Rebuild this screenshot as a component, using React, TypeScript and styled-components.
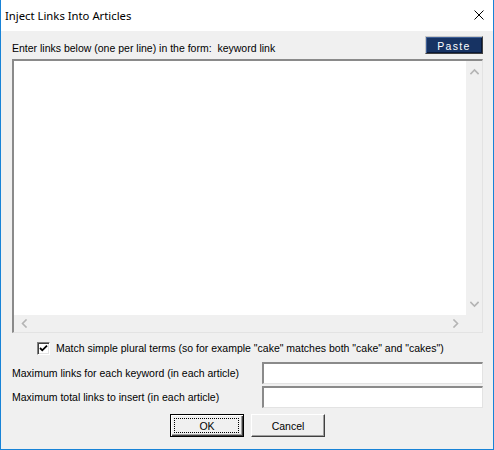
import React from "react";
import styled, { createGlobalStyle } from "styled-components";

const Global = createGlobalStyle`
  html, body { margin: 0; padding: 0; background: #ffffff; }
  body { font-family: "Liberation Sans", Arial, sans-serif; }
  * { box-sizing: border-box; }
`;

const Window = styled.div`
  width: 494px;
  height: 450px;
  display: flex;
  flex-direction: column;
  border: 1px solid #1883d7;
  border-top: none;
  background: #f0f0f0;
`;

const TitleBar = styled.div`
  height: 31px;
  flex: none;
  background: #ffffff;
  display: flex;
  align-items: center;
  justify-content: space-between;
  padding: 0 9px 1px 4px;
`;

const Title = styled.span`
  font-family: "Noto Sans", "Open Sans", sans-serif;
  font-size: 11.3px;
  color: #000;
`;

const CloseIcon = styled.svg`
  width: 10px;
  height: 10px;
  display: block;
`;

const Client = styled.div`
  flex: 1;
  display: flex;
  flex-direction: column;
  padding: 5px 10px 0 11px;
  font-size: 10.5px;
  color: #000;
`;

const HeaderRow = styled.div`
  display: flex;
  align-items: center;
  justify-content: space-between;
  height: 18px;
`;

const Label = styled.span<{ $top?: number }>`
  font-size: 10.5px;
  line-height: 13px;
  white-space: pre;
  margin-top: ${(p) => p.$top ?? 0}px;
`;

const PasteButton = styled.div`
  width: 58px;
  height: 18px;
  display: flex;
  align-items: center;
  justify-content: center;
  color: #ffffff;
  font-size: 10.5px;
  letter-spacing: 1.3px;
  background-color: #0f2c5e;
  background-image: radial-gradient(rgba(255, 255, 255, 0.07) 0.6px, transparent 0.8px);
  background-size: 2px 2px;
  border-top: 1px solid #c8c8c8;
  border-left: 1px solid #c8c8c8;
  border-right: 1px solid #404040;
  border-bottom: 1px solid #404040;
  box-shadow: inset 1px 1px 0 #3f5f96, inset -1px -1px 0 #081838;
  padding-top: 1px;
`;

const TextBox = styled.div`
  margin-top: 5px;
  height: 274px;
  display: grid;
  grid-template-columns: 1fr 16px;
  grid-template-rows: 1fr 17px;
  border-top: 2px solid #8a8a8a;
  border-left: 2px solid #8a8a8a;
  border-right: 1px solid #e3e3e3;
  border-bottom: 1px solid #e3e3e3;
  background: #f0f0f0;
`;

const TextArea = styled.div`
  background: #ffffff;
`;

const VScroll = styled.div`
  display: flex;
  flex-direction: column;
  justify-content: space-between;
  align-items: center;
  padding: 6px 0 6px 0;
  background: #f0f0f0;
`;

const HScroll = styled.div`
  display: flex;
  justify-content: space-between;
  align-items: center;
  padding: 0 6px 0 6px;
  background: #f0f0f0;
`;

const Corner = styled.div`
  background: #f0f0f0;
`;

const Chevron = styled.svg`
  width: 9px;
  height: 9px;
  display: block;
`;

const CheckRow = styled.div`
  display: flex;
  align-items: center;
  margin-top: 9px;
  padding-left: 25px;
  height: 13px;
`;

const CheckBox = styled.div`
  width: 13px;
  height: 13px;
  background: #ffffff;
  border-top: 1px solid #808080;
  border-left: 1px solid #808080;
  border-right: 1px solid #ffffff;
  border-bottom: 1px solid #ffffff;
  box-shadow: inset 1px 1px 0 #404040, inset -1px -1px 0 #e3e3e3;
  display: flex;
  align-items: center;
  justify-content: center;
  margin-right: 6px;
`;

const FieldRow = styled.div<{ $top: number }>`
  display: flex;
  align-items: center;
  justify-content: space-between;
  margin-top: ${(p) => p.$top}px;
  height: 22px;
`;

const Input = styled.div`
  width: 221px;
  height: 22px;
  background: #ffffff;
  border-top: 2px solid #8a8a8a;
  border-left: 2px solid #8a8a8a;
  border-right: 1px solid #e3e3e3;
  border-bottom: 1px solid #e3e3e3;
`;

const ButtonRow = styled.div`
  display: flex;
  justify-content: center;
  gap: 7px;
  margin-top: 6px;
`;

const Button = styled.div<{ $default?: boolean }>`
  position: relative;
  width: 74px;
  height: 23px;
  display: flex;
  align-items: center;
  justify-content: center;
  font-size: 10.5px;
  background: #f0f0f0;
  border: 1px solid;
  border-color: ${(p) => (p.$default ? "#000000" : "#ffffff #404040 #404040 #ffffff")};
  box-shadow: ${(p) =>
    p.$default
      ? "inset 1px 1px 0 #ffffff, inset -1px -1px 0 #404040, inset -2px -2px 0 #a0a0a0"
      : "inset -1px -1px 0 #a0a0a0"};
`;

const FocusRect = styled.div`
  position: absolute;
  inset: 3px 4px 3px 3px;
  border: 1px dotted #000000;
`;

const ChevronIcon = ({ dir }: { dir: "up" | "down" | "left" | "right" }) => {
  const paths: Record<string, string> = {
    up: "M1 6.5 L4.5 3 L8 6.5",
    down: "M1 2.5 L4.5 6 L8 2.5",
    left: "M6 1 L2.5 4.5 L6 8",
    right: "M3 1 L6.5 4.5 L3 8",
  };
  return (
    <Chevron viewBox="0 0 9 9">
      <path d={paths[dir]} fill="none" stroke="#b4b4b4" strokeWidth="1.6" strokeLinecap="square" />
    </Chevron>
  );
};

export default function App() {
  return (
    <>
      <Global />
      <Window>
        <TitleBar>
          <Title>Inject Links Into Articles</Title>
          <CloseIcon viewBox="0 0 10 10">
            <path d="M0.5 0.5 L9.5 9.5 M9.5 0.5 L0.5 9.5" stroke="#000" strokeWidth="1" />
          </CloseIcon>
        </TitleBar>
        <Client>
          <HeaderRow>
            <Label $top={6}>{"Enter links below (one per line) in the form:  keyword link"}</Label>
            <PasteButton>Paste</PasteButton>
          </HeaderRow>
          <TextBox>
            <TextArea />
            <VScroll>
              <ChevronIcon dir="up" />
              <ChevronIcon dir="down" />
            </VScroll>
            <HScroll>
              <ChevronIcon dir="left" />
              <ChevronIcon dir="right" />
            </HScroll>
            <Corner />
          </TextBox>
          <CheckRow>
            <CheckBox>
              <svg width="9" height="9" viewBox="0 0 9 9">
                <path d="M1 4 L3.3 6.3 L8 1.6" fill="none" stroke="#000" strokeWidth="1.8" />
              </svg>
            </CheckBox>
            <Label>{'Match simple plural terms (so for example "cake" matches both "cake" and "cakes")'}</Label>
          </CheckRow>
          <FieldRow $top={7}>
            <Label>Maximum links for each keyword (in each article)</Label>
            <Input />
          </FieldRow>
          <FieldRow $top={2}>
            <Label>Maximum total links to insert (in each article)</Label>
            <Input />
          </FieldRow>
          <ButtonRow>
            <Button $default>
              <FocusRect />
              OK
            </Button>
            <Button>Cancel</Button>
          </ButtonRow>
        </Client>
      </Window>
    </>
  );
}
